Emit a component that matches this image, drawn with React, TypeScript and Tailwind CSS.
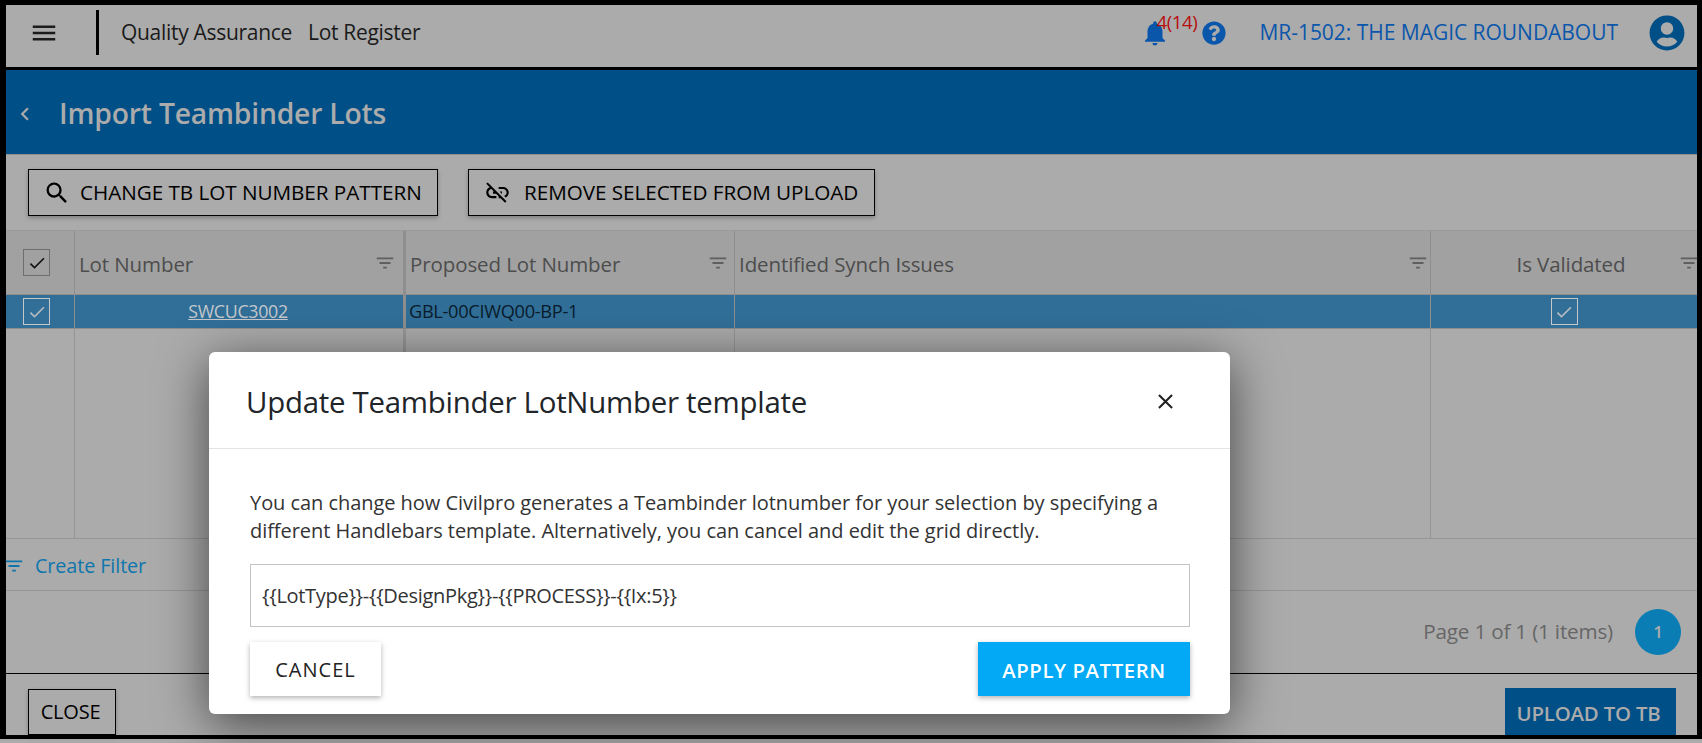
import React from "react";
import { MdMenu, MdSearch, MdLinkOff, MdNotifications, MdClose, MdFilterList, MdCheck, MdChevronLeft } from "react-icons/md";
import { FaQuestionCircle, FaUserCircle } from "react-icons/fa";

const font = "font-['Open_Sans','Noto_Sans',sans-serif]";

const HeaderCell = (props: { title: string; className?: string; iconClass: string }) => {
  return (
    <div className={`relative flex items-center pt-[3px] text-[20.5px] tracking-[-0.1px] text-[#4d4d4d] ${props.className ?? ""}`}>
      <span>{props.title}</span>
      <MdFilterList className={`absolute top-[21px] text-[22px] text-[#5f5f5f] ${props.iconClass}`} />
    </div>
  );
};

const Check = (props: { light?: boolean }) => {
  return (
    <span className={`flex h-[27px] w-[27px] items-center justify-center border ${props.light ? "border-[#c4c8cc] text-[#b8bcc0]" : "border-[#6e6e6e] text-[#111]"}`}>
      <MdCheck className="text-[20px]" />
    </span>
  );
};

export default function App() {
  return (
    <div className={`relative h-[743px] w-[1702px] overflow-hidden bg-[#ababab] ${font}`}>
      <div className="flex h-[739px] flex-col border-t-[5px] border-r-[5px] border-b-[4px] border-l-[6px] border-black bg-[#ababab]">
        {/* nav */}
        <div className="flex h-[62px] shrink-0 items-center pb-[7px]">
          <MdMenu className="ml-[23px] text-[30px] text-[#1c1c1c]" />
          <div className="ml-[37px] h-[45px] w-[3px] bg-black" />
          <span className="ml-[22px] text-[21px] tracking-[-0.3px] text-[#1a1a1a]">Quality Assurance</span>
          <span className="ml-[16px] text-[21px] tracking-[-0.3px] text-[#1a1a1a]">Lot Register</span>
          <div className="relative ml-auto flex items-center">
            <MdNotifications className="text-[30px] text-[#0a56ab]" />
            <span className="absolute left-[16px] top-[-7px] text-[18.7px] tracking-[-0.4px] text-[#b80d0d]">4(14)</span>
            <FaQuestionCircle className="ml-[32px] text-[24px] text-[#0a56ab]" />
            <span className="ml-[33px] text-[21px] tracking-[-0.03px] text-[#0a56ab]">MR-1502: THE MAGIC ROUNDABOUT</span>
            <FaUserCircle className="mr-[12px] ml-[31px] text-[36px] text-[#004f87]" />
          </div>
        </div>
        <div className="h-[3px] shrink-0 bg-black" />

        {/* title bar */}
        <div className="flex h-[85px] shrink-0 items-center border-b border-[#8f8f8f] bg-[#004f87] pt-[3px] text-[#ababab]">
          <MdChevronLeft className="ml-[6px] text-[26px]" />
          <span className="ml-[21px] text-[28.3px] font-semibold tracking-[-0.2px]">Import Teambinder Lots</span>
        </div>

        {/* toolbar */}
        <div className="flex h-[75px] shrink-0 items-start gap-[30px] pt-[14px] pl-[22px]">
          <button className="flex h-[47px] w-[410px] items-center border border-black pl-[14px] text-[20.7px] font-medium tracking-[-0.05px] text-black shadow-[0_2px_4px_rgba(0,0,0,0.25)]">
            <MdSearch className="mr-[9px] text-[28px]" />
            CHANGE TB LOT NUMBER PATTERN
          </button>
          <button className="flex h-[47px] w-[407px] items-center border border-black pl-[15px] text-[20.7px] font-medium tracking-[-0.05px] text-black shadow-[0_2px_4px_rgba(0,0,0,0.25)]">
            <MdLinkOff className="mr-[13px] text-[27px]" />
            REMOVE SELECTED FROM UPLOAD
          </button>
        </div>

        {/* grid */}
        <div className="grid h-[64px] shrink-0 grid-cols-[68px_329px_331px_696px_1fr] border-t border-[#9a9a9a] bg-[#a1a1a1]">
          <div className="flex items-center pl-[17px]">
            <Check />
          </div>
          <HeaderCell title="Lot Number" className="border-l border-[#8e8e8e] pl-[4px]" iconClass="right-[7px]" />
          <HeaderCell title="Proposed Lot Number" className="border-l-[3px] border-[#8e8e8e] pl-[4px]" iconClass="right-[5px]" />
          <HeaderCell title="Identified Synch Issues" className="border-l border-[#8e8e8e] pl-[4px]" iconClass="right-[1px]" />
          <HeaderCell title="Is Validated" className="justify-center border-l border-[#8e8e8e] pl-[14px]" iconClass="right-[-3px]" />
        </div>
        <div className="grid h-[35px] shrink-0 grid-cols-[68px_329px_331px_696px_1fr] border-y border-[#8e8e8e] bg-[#316f98]">
          <div className="flex items-center pl-[17px]">
            <Check light />
          </div>
          <div className="flex items-center justify-center border-l border-[#8e8e8e] pr-[2px] text-[17.8px] tracking-[-0.3px] text-[#c4c8cc] underline">SWCUC3002</div>
          <div className="flex items-center border-l-[3px] border-[#8e8e8e] pl-[3px] text-[18.2px] tracking-[-0.3px] text-[#0a1c2c]">GBL-00CIWQ00-BP-1</div>
          <div className="border-l border-[#8e8e8e]" />
          <div className="flex items-center justify-center border-l border-[#8e8e8e]">
            <Check light />
          </div>
        </div>
        <div className="grid h-[210px] shrink-0 grid-cols-[68px_329px_331px_696px_1fr] border-b border-[#969696]">
          <div />
          <div className="border-l border-[#969696]" />
          <div className="border-l-[3px] border-[#969696]" />
          <div className="border-l border-[#969696]" />
          <div className="border-l border-[#969696]" />
        </div>

        {/* filter row */}
        <div className="flex h-[52px] shrink-0 items-center border-b border-[#969696] pt-[3px] text-[19.8px] tracking-[-0.1px] text-[#0e76ad]">
          <MdFilterList className="ml-[-3px] text-[22px]" />
          <span className="ml-[10px]">Create Filter</span>
        </div>

        {/* pager */}
        <div className="flex h-[83px] shrink-0 items-center justify-end border-b border-black">
          <span className="text-[20.7px] tracking-[-0.2px] text-[#666]">Page 1 of 1 (1 items)</span>
          <span className="mr-[16px] ml-[22px] flex h-[46px] w-[46px] items-center justify-center rounded-full bg-[#0a7db5] text-[17px] font-semibold text-[#ababab]">1</span>
        </div>

        {/* footer */}
        <div className="flex flex-1 items-end justify-between pr-[21px] pl-[22px]">
          <button className="h-[46px] w-[88px] border border-black pr-[3px] text-[20px] font-medium tracking-[-0.2px] text-black shadow-[0_2px_4px_rgba(0,0,0,0.25)]">CLOSE</button>
          <button className="h-[47px] w-[171px] bg-[#004f87] pt-[3px] pr-[4px] text-[20.4px] font-semibold tracking-[-0.2px] text-[#ababab]">UPLOAD TO TB</button>
        </div>
      </div>

      {/* dialog */}
      <div className="absolute top-[352px] left-[209px] h-[362px] w-[1021px] rounded-[6px] bg-white shadow-[0_10px_50px_rgba(0,0,0,0.6)]">
        <div className="flex h-[97px] items-center justify-between border-b border-[#e4e4e4] pt-[4px] pr-[52px] pl-[37px]">
          <span className="text-[29.4px] font-medium tracking-[-0.25px] text-[#212529]">Update Teambinder LotNumber template</span>
          <MdClose className="mt-[-2px] text-[25px] text-[#222]" />
        </div>
        <div className="pt-[40px] pr-[40px] pl-[41px]">
          <p className="text-[20px] leading-[28px] tracking-[-0.05px] text-[#333]">
            You can change how Civilpro generates a Teambinder lotnumber for your selection by specifying a different Handlebars template. Alternatively, you can cancel and edit the grid directly.
          </p>
          <div className="mt-[19px] flex h-[63px] items-center border border-[#c4c4c4] pl-[11px] text-[20px] tracking-[-0.3px] text-[#333]">
            {"{{LotType}}-{{DesignPkg}}-{{PROCESS}}-{{Ix:5}}"}
          </div>
          <div className="mt-[15px] flex justify-between">
            <button className="h-[54px] w-[131px] bg-white pt-[2px] text-[20px] font-medium tracking-[1px] text-[#222] shadow-[0_2px_5px_rgba(0,0,0,0.3)]">CANCEL</button>
            <button className="h-[54px] w-[212px] bg-[#03a9f4] pt-[2px] text-[20.3px] font-semibold tracking-[0.6px] text-white shadow-[0_2px_5px_rgba(0,0,0,0.3)]">APPLY PATTERN</button>
          </div>
        </div>
      </div>
    </div>
  );
}
